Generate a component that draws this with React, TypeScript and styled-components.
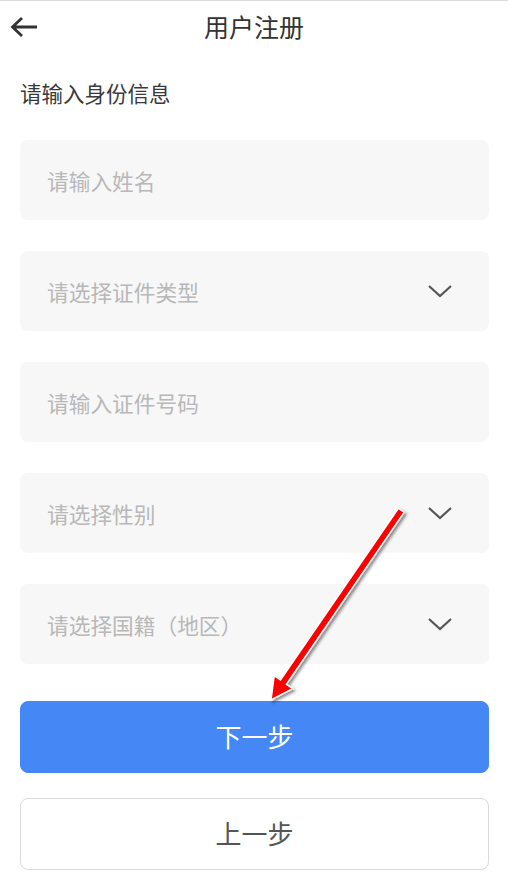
import styled, { createGlobalStyle } from 'styled-components';

const GlobalStyle = createGlobalStyle`
    html, body {
        margin: 0;
        padding: 0;
        background: #ffffff;
    }
    body {
        font-family: "Noto Sans CJK SC", "Noto Sans", sans-serif;
    }
`;

const Page = styled.div`
    position: relative;
    width: 508px;
    min-height: 896px;
    border-top: 1px solid #dcdcdc;
    box-sizing: border-box;
`;

const Header = styled.header`
    position: relative;
    height: 50px;
    display: flex;
    align-items: center;
    justify-content: center;
`;

const BackButton = styled.button`
    position: absolute;
    left: 8px;
    top: 12px;
    width: 32px;
    height: 28px;
    padding: 0;
    border: none;
    background: none;
    display: flex;
    align-items: center;
    justify-content: center;
`;

const Title = styled.h1`
    margin: 0;
    font-size: 25px;
    font-weight: 400;
    color: #333333;
`;

const Content = styled.main`
    padding: 0 19px 0 20px;
`;

const SectionLabel = styled.p`
    margin: 27px 0 32px;
    line-height: 30px;
    font-size: 21.5px;
    color: #3a3a3a;
`;

const Form = styled.div`
    display: flex;
    flex-direction: column;
    gap: 31px;
`;

const Field = styled.div`
    height: 80px;
    display: flex;
    align-items: center;
    justify-content: space-between;
    padding: 0 36px 0 27px;
    border-radius: 8px;
    background: #f7f7f7;
`;

const Placeholder = styled.span`
    font-size: 21.7px;
    color: #b8b8b8;
`;

const Actions = styled.div`
    display: flex;
    flex-direction: column;
    gap: 25px;
    margin-top: 37px;
`;

const ActionButton = styled.button<{ $primary?: boolean }>`
    height: 72px;
    padding: 0 0 4px;
    border-radius: 8px;
    font-family: inherit;
    font-size: 26px;
    border: 1px solid ${(p) => (p.$primary ? '#4487f5' : '#dadada')};
    background: ${(p) => (p.$primary ? '#4487f5' : '#ffffff')};
    color: ${(p) => (p.$primary ? '#ffffff' : '#555555')};
`;

const Overlay = styled.svg`
    position: absolute;
    left: 0;
    top: 0;
    pointer-events: none;
`;

const fields = [
    { text: '请输入姓名', select: false },
    { text: '请选择证件类型', select: true },
    { text: '请输入证件号码', select: false },
    { text: '请选择性别', select: true },
    { text: '请选择国籍（地区）', select: true },
];

function Chevron() {
    return (
        <svg width="26" height="16" viewBox="0 0 26 16">
            <path d="M2 3 L13 13 L24 3" fill="none" stroke="#555555" strokeWidth="2.2" />
        </svg>
    );
}

export default function App() {
    return (
        <>
            <GlobalStyle />
            <Page>
                <Header>
                    <BackButton aria-label="返回">
                        <svg width="30" height="24" viewBox="0 0 30 24">
                            <path
                                d="M28 12 H4 M13 3 L3.5 12 L13 21"
                                fill="none"
                                stroke="#333333"
                                strokeWidth="2.8"
                            />
                        </svg>
                    </BackButton>
                    <Title>用户注册</Title>
                </Header>
                <Content>
                    <SectionLabel>请输入身份信息</SectionLabel>
                    <Form>
                        {fields.map((f) => (
                            <Field key={f.text}>
                                <Placeholder>{f.text}</Placeholder>
                                {f.select && <Chevron />}
                            </Field>
                        ))}
                    </Form>
                    <Actions>
                        <ActionButton $primary>下一步</ActionButton>
                        <ActionButton>上一步</ActionButton>
                    </Actions>
                </Content>
                <Overlay width="508" height="896" viewBox="0 0 508 896">
                    <defs>
                        <filter id="shadow" x="-20%" y="-20%" width="140%" height="140%">
                            <feDropShadow dx="2" dy="2" stdDeviation="1.5" floodColor="#000" floodOpacity="0.45" />
                        </filter>
                    </defs>
                    <polygon
                        points="404.2,511.2 286.4,683.3 292.7,687.6 271,699 274.2,674.7 280.5,679.0 398.4,507.3"
                        fill="#ff0000"
                        stroke="#ffffff"
                        strokeWidth="1.5"
                        strokeLinejoin="miter"
                        filter="url(#shadow)"
                    />
                </Overlay>
            </Page>
        </>
    );
}
